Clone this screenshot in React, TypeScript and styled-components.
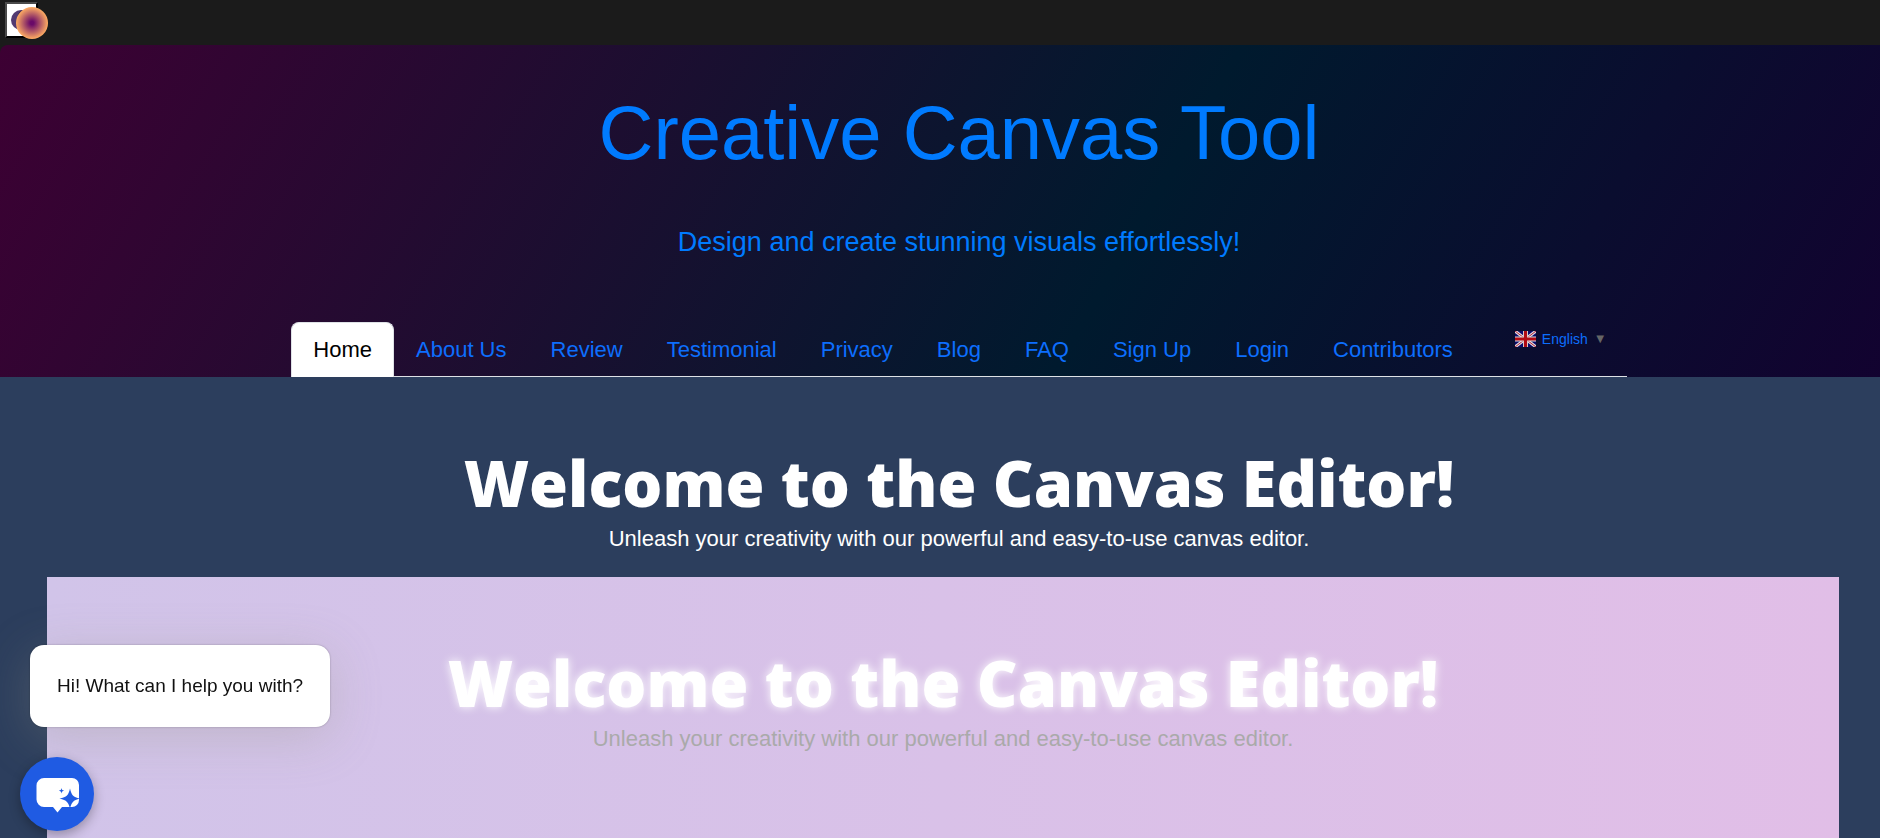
import React from "react";
import styled, { createGlobalStyle } from "styled-components";

const GlobalStyle = createGlobalStyle`
  *, *::before, *::after { box-sizing: border-box; }
  html, body { margin: 0; }
  body {
    min-height: 100vh;
    background: #2c3e5d;
    font-family: Arial, "Liberation Sans", sans-serif;
    font-size: 22px;
    overflow: hidden;
  }
`;

const Top = styled.div`
  background: #1b1b1b;
`;

const TopBar = styled.div`
  position: relative;
  height: 45px;
  padding: 2px 0 0 5px;
`;

const ThemeToggle = styled.button`
  display: block;
  width: 33px;
  height: 36px;
  padding: 4px;
  background: #fff;
  border: 2px solid;
  border-color: #4a4a4a #000 #000 #4a4a4a;
`;

const CursorBall = styled.span`
  position: absolute;
  left: 16px;
  top: 7px;
  width: 32px;
  height: 32px;
  border-radius: 50%;
  background: radial-gradient(circle, #6a0a68 8%, #f9a663 68%);
`;

const Header = styled.header`
  display: flex;
  flex-direction: column;
  align-items: center;
  padding: 44px 0 0 38px;
  border-radius: 8px 0 0 0;
  background: linear-gradient(120deg, #3d0033 0%, #001a2e 60%, #140030 104%);
`;

const Title = styled.h1`
  margin: 0;
  font-size: 76px;
  line-height: 88px;
  font-weight: 400;
  color: #007bff;
`;

const Tagline = styled.p`
  margin: 48px 0 0;
  font-size: 27px;
  line-height: 34px;
  color: #007bff;
`;

const Nav = styled.nav`
  display: flex;
  align-items: flex-start;
  margin-top: 63px;
  padding-right: 20px;
  border-bottom: 1px solid #dee2e6;
`;

const Tab = styled.a<{ $active?: boolean }>`
  padding: 10px 21px 11px;
  margin-bottom: -1px;
  border: 1px solid ${(p) => (p.$active ? "#dee2e6" : "transparent")};
  border-bottom: 0;
  border-radius: 8px 8px 0 0;
  background: ${(p) => (p.$active ? "#fff" : "transparent")};
  color: ${(p) => (p.$active ? "#000" : "#0d6efd")};
  line-height: 33px;
  text-decoration: none;
`;

const Language = styled.a`
  display: flex;
  align-items: center;
  gap: 6px;
  margin: 9px 0 0 40px;
  font-size: 14px;
  line-height: 16px;
  color: #0d6efd;
  text-decoration: none;
`;

const Caret = styled.span`
  color: #666;
  font-size: 13px;
`;

const Section = styled.section`
  padding: 67px 41px 0 47px;
`;

const Intro = styled.div`
  padding-left: 32px;
`;

const Welcome = styled.h2<{ $glow?: boolean }>`
  margin: 0;
  font-family: "Open Sans", sans-serif;
  font-weight: 800;
  font-size: 63px;
  line-height: 78px;
  text-align: center;
  color: #fff;
  text-shadow: ${(p) => (p.$glow ? "0 0 10px #fff" : "none")};
`;

const Lead = styled.p<{ $muted?: boolean }>`
  margin: 0;
  line-height: 33px;
  text-align: center;
  color: ${(p) => (p.$muted ? "#aaa" : "#fff")};
`;

const Panel = styled.div`
  min-height: 300px;
  margin-top: 22px;
  padding-top: 67px;
  background: linear-gradient(90deg, #d1c4e9, #e1bee7);
`;

const ChatBubble = styled.div`
  position: fixed;
  left: 30px;
  bottom: 111px;
  padding: 27px 27px 28px;
  border-radius: 14px;
  background: #fff;
  color: #111;
  font-size: 19px;
  line-height: 27px;
  box-shadow: 0 0 2px rgba(0, 0, 0, 0.3), 0 10px 50px rgba(150, 150, 130, 0.3);
`;

const ChatButton = styled.button`
  position: fixed;
  left: 20px;
  bottom: 7px;
  width: 74px;
  height: 74px;
  padding: 0;
  border: 0;
  border-radius: 50%;
  background: #1f5be3;
  box-shadow: 0 4px 12px rgba(0, 0, 0, 0.3);
  svg { display: block; }
`;

const tabs = ["Home", "About Us", "Review", "Testimonial", "Privacy", "Blog", "FAQ", "Sign Up", "Login", "Contributors"];

const Moon = () => (
  <svg width="21" height="24" viewBox="0 0 21 24" aria-hidden="true">
    <circle cx="10" cy="12" r="10" fill="#523a70" />
    <circle cx="13" cy="8" r="6" fill="#2f1d4d" />
  </svg>
);

const Flag = () => (
  <svg width="21" height="16" viewBox="0 0 21 16" aria-hidden="true">
    <rect width="21" height="16" fill="#0b0b6b" />
    <path d="M0 0L21 16M21 0L0 16" stroke="#ddd" strokeWidth="3" />
    <path d="M0 0L21 16M21 0L0 16" stroke="#b8203a" strokeWidth="1" />
    <path d="M10.5 0V16M0 8H21" stroke="#ddd" strokeWidth="5" />
    <path d="M10.5 0V16M0 8H21" stroke="#b00a12" strokeWidth="3.2" />
  </svg>
);

const ChatIcon = () => (
  <svg width="74" height="74" viewBox="0 0 74 74" aria-hidden="true">
    <path d="M24 21H52a7 7 0 0 1 7 7V43a7 7 0 0 1-7 7H42L37.5 55.5L33 50H24a7.5 7.5 0 0 1-7.5-7.5V28.5A7.5 7.5 0 0 1 24 21Z" fill="#fff" />
    <path d="M50 31.5C51.500 38 53 40 60 41.500C53 43.500 51.500 45 50 52C48.500 45 47 43.500 39.500 41.500C47 40 48.500 38 50 31.500Z" fill="#1f5be3" />
    <path d="M41.500 31C42 33 42.200 33.200 44.200 33.700C42.200 34.200 42 34.400 41.500 36.400C41 34.400 40.800 34.200 38.800 33.700C40.800 33.200 41 33 41.500 31Z" fill="#1f5be3" />
  </svg>
);

function WelcomeText({ glow }: { glow?: boolean }) {
  return (
    <>
      <Welcome $glow={glow}>Welcome to the Canvas Editor!</Welcome>
      <Lead $muted={glow}>Unleash your creativity with our powerful and easy-to-use canvas editor.</Lead>
    </>
  );
}

export default function App() {
  return (
    <>
      <GlobalStyle />
      <Top>
        <TopBar>
          <ThemeToggle aria-label="Toggle theme"><Moon /></ThemeToggle>
          <CursorBall />
        </TopBar>
        <Header>
          <Title>Creative Canvas Tool</Title>
          <Tagline>Design and create stunning visuals effortlessly!</Tagline>
          <Nav>
            {tabs.map((tab, i) => (
              <Tab key={tab} href="#" $active={i === 0}>{tab}</Tab>
            ))}
            <Language href="#">
              <Flag />
              <span>English</span>
              <Caret>▼</Caret>
            </Language>
          </Nav>
        </Header>
      </Top>
      <Section>
        <Intro><WelcomeText /></Intro>
        <Panel><WelcomeText glow /></Panel>
      </Section>
      <ChatBubble>Hi! What can I help you with?</ChatBubble>
      <ChatButton aria-label="Open chat"><ChatIcon /></ChatButton>
    </>
  );
}
